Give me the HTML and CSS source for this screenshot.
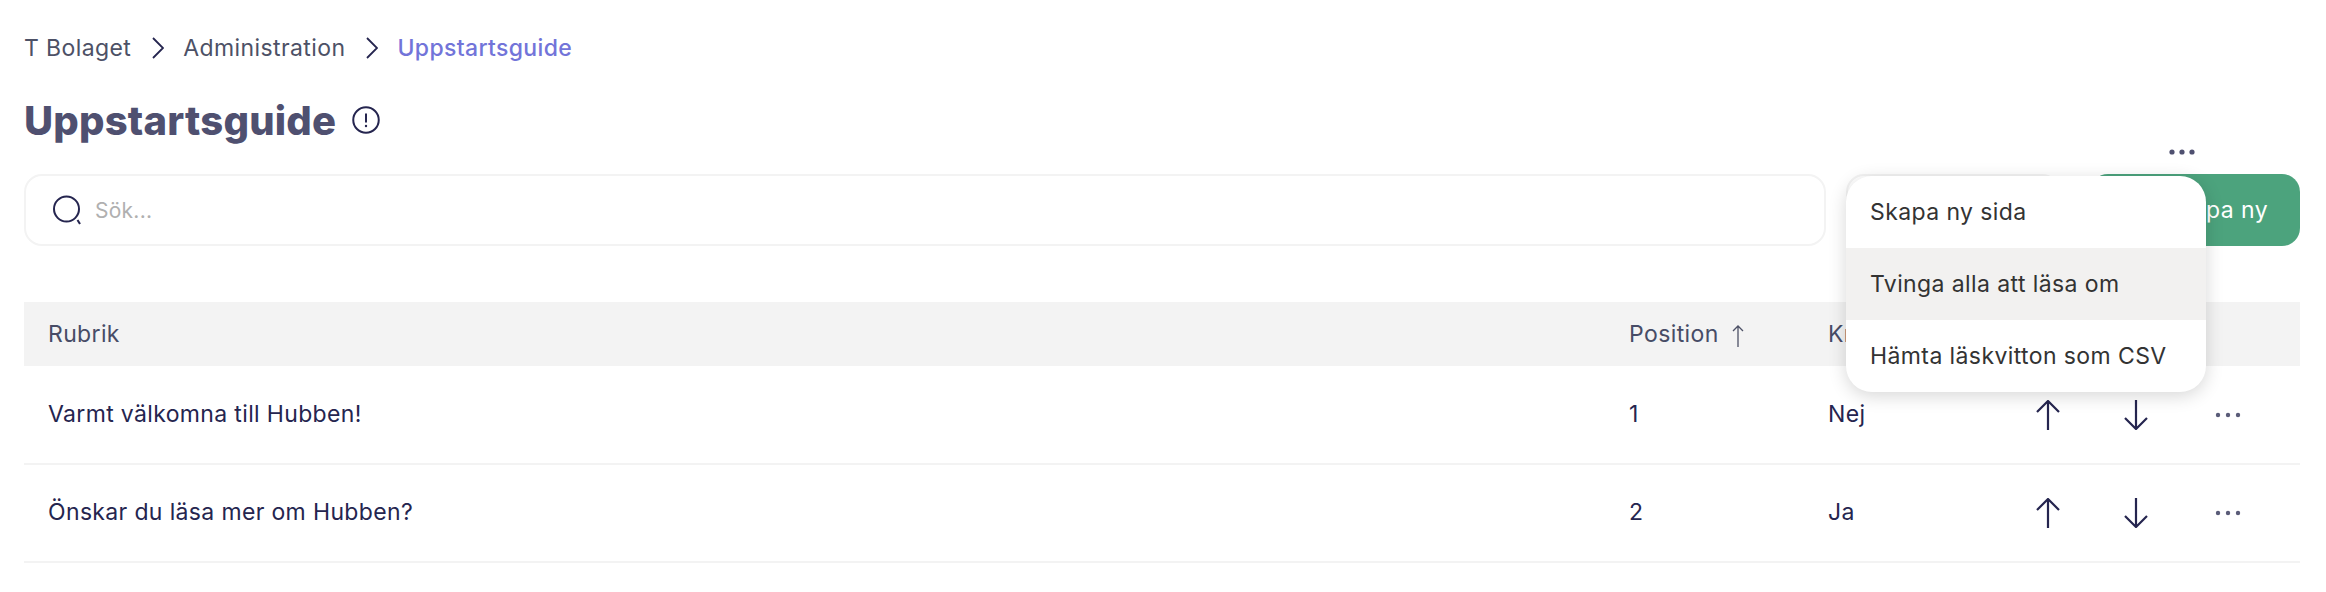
FILE: index.html
```html
<!DOCTYPE html>
<html lang="en">
<head>
    <meta charset="UTF-8">
    <meta name="viewport" content="width=device-width, initial-scale=1.0">
    <title>Uppstartsguide</title>
    <link rel="stylesheet" href="styles.css">
</head>
<body>
    <div class="page">
        <!-- Breadcrumb -->
        <nav class="breadcrumb">
            <span>T Bolaget</span>
            <svg class="crumb-sep" viewBox="0 0 12 22"><path d="M1 1l10 10L1 21"/></svg>
            <span>Administration</span>
            <svg class="crumb-sep" viewBox="0 0 12 22"><path d="M1 1l10 10L1 21"/></svg>
            <span class="crumb-current">Uppstartsguide</span>
        </nav>

        <div class="title-row">
            <h1>Uppstartsguide</h1>
            <svg class="info-icon" viewBox="0 0 28 28">
                <circle cx="14" cy="14" r="12.75"/>
                <path d="M14 7.5v9"/>
                <circle class="dot" cx="14" cy="20" r="1.2"/>
            </svg>
        </div>

        <div class="more-row">
            <svg class="more-main" viewBox="0 0 26 6">
                <circle cx="3" cy="3" r="2.6"/><circle cx="13" cy="3" r="2.6"/><circle cx="23" cy="3" r="2.6"/>
            </svg>
        </div>

        <div class="toolbar">
            <div class="search-bar">
                <svg class="search-icon" viewBox="0 0 30 30">
                    <circle cx="14.5" cy="14" r="12.5"/>
                    <path d="M25.5 25l2.5 4"/>
                </svg>
                <input type="text" placeholder="Sök...">
            </div>
            <button class="btn-outline"></button>
            <button class="btn-create">Skapa ny</button>
        </div>

        <table class="guide-table">
            <colgroup>
                <col class="col-title">
                <col class="col-position">
                <col class="col-required">
                <col>
            </colgroup>
            <thead>
                <tr>
                    <th>Rubrik</th>
                    <th>
                        Position
                        <svg class="sort-icon" viewBox="0 0 14 22"><path d="M7 22V1M2 6l5-5 5 5"/></svg>
                    </th>
                    <th>Krav</th>
                    <th></th>
                </tr>
            </thead>
            <tbody>
                <tr>
                    <td>Varmt välkomna till Hubben!</td>
                    <td>1</td>
                    <td>Nej</td>
                    <td>
                        <div class="row-actions">
                            <svg class="arrow" viewBox="0 0 24 30"><path d="M12 30V1M1 12L12 1l11 11"/></svg>
                            <svg class="arrow" viewBox="0 0 24 30"><path d="M12 0v29M1 18l11 11 11-11"/></svg>
                            <svg class="more-row-icon" viewBox="0 0 26 6">
                                <circle cx="3" cy="3" r="2.2"/><circle cx="13" cy="3" r="2.2"/><circle cx="23" cy="3" r="2.2"/>
                            </svg>
                        </div>
                    </td>
                </tr>
                <tr>
                    <td>Önskar du läsa mer om Hubben?</td>
                    <td>2</td>
                    <td>Ja</td>
                    <td>
                        <div class="row-actions">
                            <svg class="arrow" viewBox="0 0 24 30"><path d="M12 30V1M1 12L12 1l11 11"/></svg>
                            <svg class="arrow" viewBox="0 0 24 30"><path d="M12 0v29M1 18l11 11 11-11"/></svg>
                            <svg class="more-row-icon" viewBox="0 0 26 6">
                                <circle cx="3" cy="3" r="2.2"/><circle cx="13" cy="3" r="2.2"/><circle cx="23" cy="3" r="2.2"/>
                            </svg>
                        </div>
                    </td>
                </tr>
            </tbody>
        </table>

        <!-- Open dropdown -->
        <div class="menu">
            <div class="menu-item">Skapa ny sida</div>
            <div class="menu-item active">Tvinga alla att läsa om</div>
            <div class="menu-item">Hämta läskvitton som CSV</div>
        </div>
    </div>
</body>
</html>
```

FILE: styles.css
```css
* {
    box-sizing: border-box;
}
body {
    margin: 0;
    background: #ffffff;
    font-family: Inter, "Liberation Sans", sans-serif;
    font-size: 23px;
    font-weight: 375;
    letter-spacing: 0.4px;
    color: #25254f;
}
.page {
    position: relative;
    height: 592px;
    padding: 33px 26px 0 24px;
    overflow: hidden;
}
.breadcrumb {
    display: flex;
    align-items: center;
    height: 30px;
    color: #4d5166;
}
.crumb-sep {
    width: 12px;
    height: 22px;
    margin: 0 19px 0 21px;
    fill: none;
    stroke: #25254f;
    stroke-width: 1.8;
}
.crumb-current {
    color: #7274d9;
    font-weight: 500;
    letter-spacing: 0.35px;
}
.title-row {
    display: flex;
    align-items: center;
    height: 48px;
    margin-top: 33px;
}
h1 {
    margin: 0;
    font-size: 40px;
    font-weight: 800;
    letter-spacing: 0.2px;
    color: #4f5070;
}
.info-icon {
    width: 28px;
    height: 28px;
    margin-left: 16px;
    fill: none;
    stroke: #25254f;
    stroke-width: 2;
}
.info-icon .dot {
    fill: #25254f;
    stroke: none;
}
.more-row {
    display: flex;
    justify-content: flex-end;
    height: 6px;
    margin-top: 5px;
    padding-right: 105px;
}
.more-main {
    width: 26px;
    height: 6px;
    fill: #4f5070;
}
.toolbar {
    display: flex;
    height: 72px;
    margin-top: 19px;
}
.search-bar {
    flex: 1;
    display: flex;
    align-items: center;
    padding-left: 26px;
    border: 2px solid #f3f3f3;
    border-radius: 18px;
}
.search-icon {
    width: 30px;
    height: 30px;
    fill: none;
    stroke: #25254f;
    stroke-width: 2;
}
.search-bar input {
    flex: 1;
    margin-left: 11px;
    border: none;
    outline: none;
    background: none;
    font: inherit;
    font-size: 21px;
    letter-spacing: 0.25px;
}
.search-bar input::placeholder {
    color: #b0b0b0;
}
.btn-outline {
    width: 214px;
    margin-left: 20px;
    border: 2px solid #f3f3f3;
    border-radius: 18px;
    background: #ffffff;
}
.btn-create {
    width: 210px;
    margin-left: 30px;
    padding: 0 32px 0 0;
    border: none;
    border-radius: 18px;
    background: #4ca37d;
    color: #ffffff;
    font: inherit;
    letter-spacing: inherit;
    text-align: right;
}
.guide-table {
    width: 100%;
    margin-top: 56px;
    border-collapse: collapse;
    table-layout: fixed;
}
.col-title {
    width: 1581px;
}
.col-position {
    width: 199px;
}
.col-required {
    width: 191px;
}
.guide-table th {
    height: 64px;
    padding: 0 24px;
    background: #f3f3f3;
    color: #474c66;
    font-weight: 400;
    text-align: left;
}
.guide-table th:first-child,
.guide-table td:first-child {
    padding-left: 24px;
    letter-spacing: 0.35px;
}
.guide-table td {
    height: 98px;
    padding: 0 24px 2px;
    border-bottom: 2px solid #f3f3f3;
}
.sort-icon {
    width: 14px;
    height: 22px;
    margin-left: 5px;
    vertical-align: -5px;
    fill: none;
    stroke: #4d5166;
    stroke-width: 1.3;
}
.guide-table td:last-child {
    padding: 0;
}
.row-actions {
    display: flex;
    align-items: center;
    padding-left: 41px;
}
.arrow {
    width: 24px;
    height: 30px;
    margin-right: 64px;
    fill: none;
    stroke: #25254f;
    stroke-width: 2.2;
}
.more-row-icon {
    width: 26px;
    height: 6px;
    margin-left: 3px;
    fill: #5a5c78;
}
.menu {
    position: absolute;
    left: 1846px;
    top: 176px;
    width: 360px;
    overflow: hidden;
    background: #ffffff;
    border-radius: 26px;
    box-shadow: 0 4px 18px rgba(0, 0, 0, 0.16);
}
.menu-item {
    display: flex;
    align-items: center;
    height: 72px;
    padding: 0 24px;
    color: #333333;
}
.menu-item.active {
    background: #f2f1f0;
}
```
